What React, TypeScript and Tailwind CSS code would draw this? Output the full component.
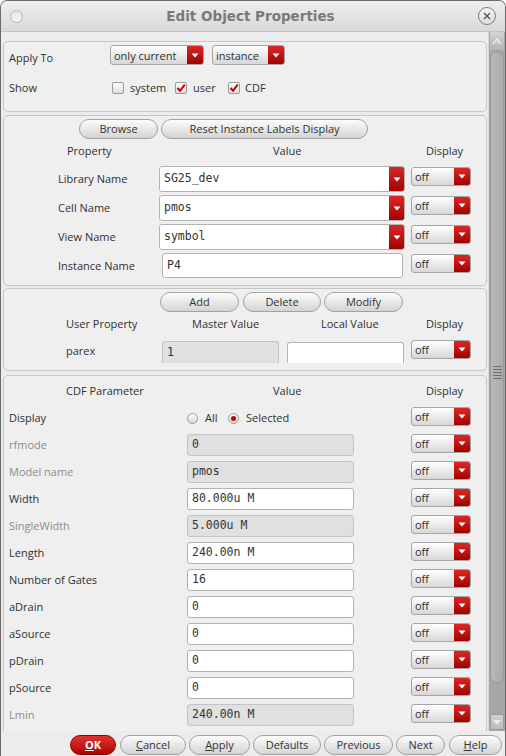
import type { ReactNode } from 'react';

const mono = "font-['DejaVu_Sans_Mono',monospace] text-[11.5px] text-[#333]";

function Arrow() {
  return (
    <svg width="8" height="5" viewBox="0 0 8 5">
      <path d="M0.5 0.5 H7.5 L4 4.6 Z" fill="#ffffff" />
    </svg>
  );
}

function Combo({ className, text }: { className: string; text: string }) {
  return (
    <div
      className={`flex overflow-hidden rounded-[3px] border border-[#a5a5a5] bg-linear-to-b from-white to-[#d7d7d7] ${className}`}
    >
      <span className="flex flex-1 items-center pl-[3px] leading-none">{text}</span>
      <span className="flex w-[16px] items-center justify-center bg-linear-to-b from-[#dc2626] to-[#a10000]">
        <Arrow />
      </span>
    </div>
  );
}

function EditCombo({ text }: { text: string }) {
  return (
    <div className="flex h-[26px] w-[246px] overflow-hidden rounded-[3px] border border-[#b3b3b3] bg-white">
      <span className={`flex flex-1 items-center pl-[4px] ${mono}`}>{text}</span>
      <span className="flex w-[15px] items-center justify-center bg-linear-to-b from-[#dc2626] to-[#a10000]">
        <Arrow />
      </span>
    </div>
  );
}

function Field({
  className,
  text,
  ro,
}: {
  className: string;
  text?: string;
  ro?: boolean;
}) {
  return (
    <div
      className={`flex items-center rounded-[3px] border pl-[4px] ${mono} ${
        ro ? 'border-[#c4c4c4] bg-[#e0e0e0]' : 'border-[#b3b3b3] bg-white'
      } ${className}`}
    >
      {text}
    </div>
  );
}

function Pill({ className, children, red }: { className: string; children: ReactNode; red?: boolean }) {
  return (
    <div
      className={`flex h-[20px] items-center justify-center rounded-full border ${
        red
          ? 'border-[#8e0000] bg-linear-to-b from-[#e03030] to-[#b00000] font-bold text-white'
          : 'border-[#a2a2a2] bg-linear-to-b from-[#fcfcfc] to-[#d4d4d4] text-[#333]'
      } ${className}`}
    >
      {children}
    </div>
  );
}

function Check({ on }: { on?: boolean }) {
  return (
    <span className="flex h-[12px] w-[12px] items-center justify-center rounded-[2px] border border-[#9a9a9a] bg-linear-to-b from-white to-[#dedede]">
      {on ? (
        <svg width="10" height="10" viewBox="0 0 10 10">
          <path d="M1.5 5 L4 7.8 L8.8 1.6" stroke="#c40000" strokeWidth="2" fill="none" />
        </svg>
      ) : null}
    </span>
  );
}

function Radio({ on }: { on?: boolean }) {
  return (
    <span className="flex h-[11px] w-[11px] items-center justify-center rounded-full border border-[#9a9a9a] bg-linear-to-b from-white to-[#d8d8d8]">
      {on ? <span className="h-[5px] w-[5px] rounded-full bg-[#c80000]" /> : null}
    </span>
  );
}

const cdfRows: { label: string; value: string; ro?: boolean }[] = [
  { label: 'rfmode', value: '0', ro: true },
  { label: 'Model name', value: 'pmos', ro: true },
  { label: 'Width', value: '80.000u M' },
  { label: 'SingleWidth', value: '5.000u M', ro: true },
  { label: 'Length', value: '240.00n M' },
  { label: 'Number of Gates', value: '16' },
  { label: 'aDrain', value: '0' },
  { label: 'aSource', value: '0' },
  { label: 'pDrain', value: '0' },
  { label: 'pSource', value: '0' },
  { label: 'Lmin', value: '240.00n M', ro: true },
];

const propRows = [
  { label: 'Library Name', value: 'SG25_dev' },
  { label: 'Cell Name', value: 'pmos' },
  { label: 'View Name', value: 'symbol' },
];

export default function App() {
  return (
    <div className="flex h-[756px] w-[506px] flex-col overflow-hidden rounded-t-[7px] border border-b-0 border-[#6a6a6a] bg-[#ececec] font-['Open_Sans',sans-serif] text-[11px] text-[#2f2f2f]">
      {/* title bar */}
      <div className="flex h-[31px] shrink-0 items-center border-b border-[#c4c4c4] bg-linear-to-b from-[#eeeeee] to-[#d9d9d9] px-[9px]">
        <span className="h-[13px] w-[13px] rounded-full border border-[#b4b4b4] bg-linear-to-b from-[#e6e6e6] to-[#f6f6f6]" />
        <span className="flex-1 text-center font-['DejaVu_Sans',sans-serif] text-[13.5px] font-bold text-[#7a7a7a]">
          Edit Object Properties
        </span>
        <span className="flex h-[18px] w-[18px] items-center justify-center rounded-full border border-[#7c7c7c] bg-linear-to-b from-[#f4f4f4] to-[#dcdcdc]">
          <svg width="8" height="8" viewBox="0 0 8 8">
            <path d="M1 1 L7 7 M7 1 L1 7" stroke="#555" strokeWidth="1.4" />
          </svg>
        </span>
      </div>

      <div className="flex h-[699px] shrink-0">
        <div className="w-[487px] overflow-hidden">
          {/* apply to */}
          <div className="ml-[2px] mt-[9px] h-[71px] w-[484px] rounded-[5px] border border-[#c6c6c6] bg-[#efefef] pt-[3px]">
            <div className="flex h-[20px] pl-[5px]">
              <span className="mt-[5px] w-[101px]">Apply To</span>
              <Combo className="h-[20px] w-[94px]" text="only current" />
              <Combo className="ml-[8px] h-[20px] w-[73px]" text="instance" />
            </div>
            <div className="mt-[16px] flex h-[14px] items-center pl-[5px]">
              <span className="w-[103px]">Show</span>
              <span className="flex w-[63px] items-center gap-[6px]">
                <Check /> system
              </span>
              <span className="flex w-[53px] items-center gap-[6px]">
                <Check on /> user
              </span>
              <span className="flex items-center gap-[5px]">
                <Check on /> CDF
              </span>
            </div>
          </div>

          {/* properties */}
          <div className="ml-[2px] mt-[3px] h-[171px] w-[484px] rounded-[5px] border border-[#c6c6c6] bg-[#efefef] pt-[3px]">
            <div className="flex">
              <Pill className="ml-[75px] w-[79px]">Browse</Pill>
              <Pill className="ml-[3px] w-[207px]">Reset Instance Labels Display</Pill>
            </div>
            <div className="mt-[5px] flex h-[14px] items-center">
              <span className="ml-[63px] w-[206px]">Property</span>
              <span className="w-[153px]">Value</span>
              <span>Display</span>
            </div>
            <div className="mt-[8px] flex flex-col gap-[3px]">
              {propRows.map((r) => (
                <div key={r.label} className="flex h-[26px]">
                  <span className="ml-[54px] flex w-[101px] items-center">{r.label}</span>
                  <EditCombo text={r.value} />
                  <Combo className="ml-[6px] mt-[1px] h-[19px] w-[60px]" text="off" />
                </div>
              ))}
              <div className="flex h-[26px]">
                <span className="ml-[54px] flex w-[104px] items-center">Instance Name</span>
                <Field className="h-[25px] w-[241px]" text="P4" />
                <Combo className="ml-[8px] mt-[1px] h-[19px] w-[60px]" text="off" />
              </div>
            </div>
          </div>

          {/* user property */}
          <div className="ml-[2px] mt-[2px] h-[83px] w-[484px] rounded-[5px] border border-[#c6c6c6] bg-[#efefef] pt-[3px]">
            <div className="flex">
              <Pill className="ml-[156px] w-[79px]">Add</Pill>
              <Pill className="ml-[4px] w-[78px]">Delete</Pill>
              <Pill className="ml-[3px] w-[79px]">Modify</Pill>
            </div>
            <div className="mt-[5px] flex h-[14px] items-center">
              <span className="ml-[62px] w-[126px]">User Property</span>
              <span className="w-[129px]">Master Value</span>
              <span className="w-[105px]">Local Value</span>
              <span>Display</span>
            </div>
            <div className="mt-[9px] flex h-[23px]">
              <span className="ml-[62px] flex w-[96px] items-center">parex</span>
              <Field className="mt-[1px] h-[22px] w-[117px] rounded-b-none border-b-0" text="1" ro />
              <Field className="ml-[8px] mt-[2px] h-[21px] w-[117px] rounded-b-none border-b-0" />
              <Combo className="ml-[7px] h-[19px] w-[60px]" text="off" />
            </div>
          </div>

          {/* cdf */}
          <div className="ml-[2px] mt-[4px] h-[400px] w-[484px] rounded-[5px] border border-[#c6c6c6] bg-[#efefef] pt-[8px]">
            <div className="flex h-[14px] items-center">
              <span className="ml-[62px] w-[207px]">CDF Parameter</span>
              <span className="w-[153px]">Value</span>
              <span>Display</span>
            </div>
            <div className="mt-[9px] flex flex-col gap-[5px]">
              <div className="flex h-[22px]">
                <span className="flex w-[183px] items-center pl-[5px]">Display</span>
                <span className="flex w-[167px] items-center">
                  <Radio />
                  <span className="ml-[7px] w-[23px]">All</span>
                  <Radio on />
                  <span className="ml-[7px]">Selected</span>
                </span>
                <Combo className="ml-[57px] h-[19px] w-[60px]" text="off" />
              </div>
              {cdfRows.map((r) => (
                <div key={r.label} className="flex h-[22px]">
                  <span className={`flex w-[183px] items-center pl-[5px] ${r.ro ? 'text-[#8c8c8c]' : ''}`}>
                    {r.label}
                  </span>
                  <Field className="h-[22px] w-[167px]" text={r.value} ro={r.ro} />
                  <Combo className="ml-[57px] h-[19px] w-[60px]" text="off" />
                </div>
              ))}
            </div>
          </div>
        </div>

        {/* scrollbar */}
        <div className="flex w-[17px] flex-col border-l border-[#d8d8d8] bg-[#a6a6a6] px-[1px]">
          <div className="flex h-[18px] items-center justify-center bg-linear-to-b from-[#d2d2d2] to-[#b4b4b4]">
            <svg width="10" height="7" viewBox="0 0 10 7">
              <path d="M1 6 L5 1 L9 6" stroke="#f4f4f4" strokeWidth="1.2" fill="#c8c8c8" />
            </svg>
          </div>
          <div className="mt-[1px] flex h-[632px] items-center justify-center rounded-[7px] border border-[#999] bg-linear-to-r from-[#b8b8b8] to-[#ababab]">
            <div className="flex flex-col gap-[2px] pt-[10px]">
              <span className="h-px w-[9px] bg-[#6f6f6f]" />
              <span className="h-px w-[9px] bg-[#6f6f6f]" />
              <span className="h-px w-[9px] bg-[#6f6f6f]" />
              <span className="h-px w-[9px] bg-[#6f6f6f]" />
              <span className="h-px w-[9px] bg-[#6f6f6f]" />
            </div>
          </div>
          <div className="flex-1" />
          <div className="mb-[1px] flex h-[16px] items-center justify-center border border-[#9c9c9c] bg-linear-to-b from-[#d0d0d0] to-[#bcbcbc]">
            <svg width="10" height="7" viewBox="0 0 10 7">
              <path d="M1 1 L5 6 L9 1 Z" fill="#ededed" />
            </svg>
          </div>
        </div>
      </div>

      {/* bottom buttons */}
      <div className="flex flex-1 pt-[4px]">
        <Pill red className="ml-[69px] w-[46px]">
          <span className="underline">O</span>K
        </Pill>
        <Pill className="ml-[4px] w-[66px]">
          <span className="underline">C</span>ancel
        </Pill>
        <Pill className="ml-[3px] w-[61px]">
          <span className="underline">A</span>pply
        </Pill>
        <Pill className="ml-[3px] w-[68px]">Defaults</Pill>
        <Pill className="ml-[3px] w-[69px]">Previous</Pill>
        <Pill className="ml-[3px] w-[49px]">Next</Pill>
        <Pill className="ml-[4px] w-[53px]">
          <span className="underline">H</span>elp
        </Pill>
      </div>
    </div>
  );
}
